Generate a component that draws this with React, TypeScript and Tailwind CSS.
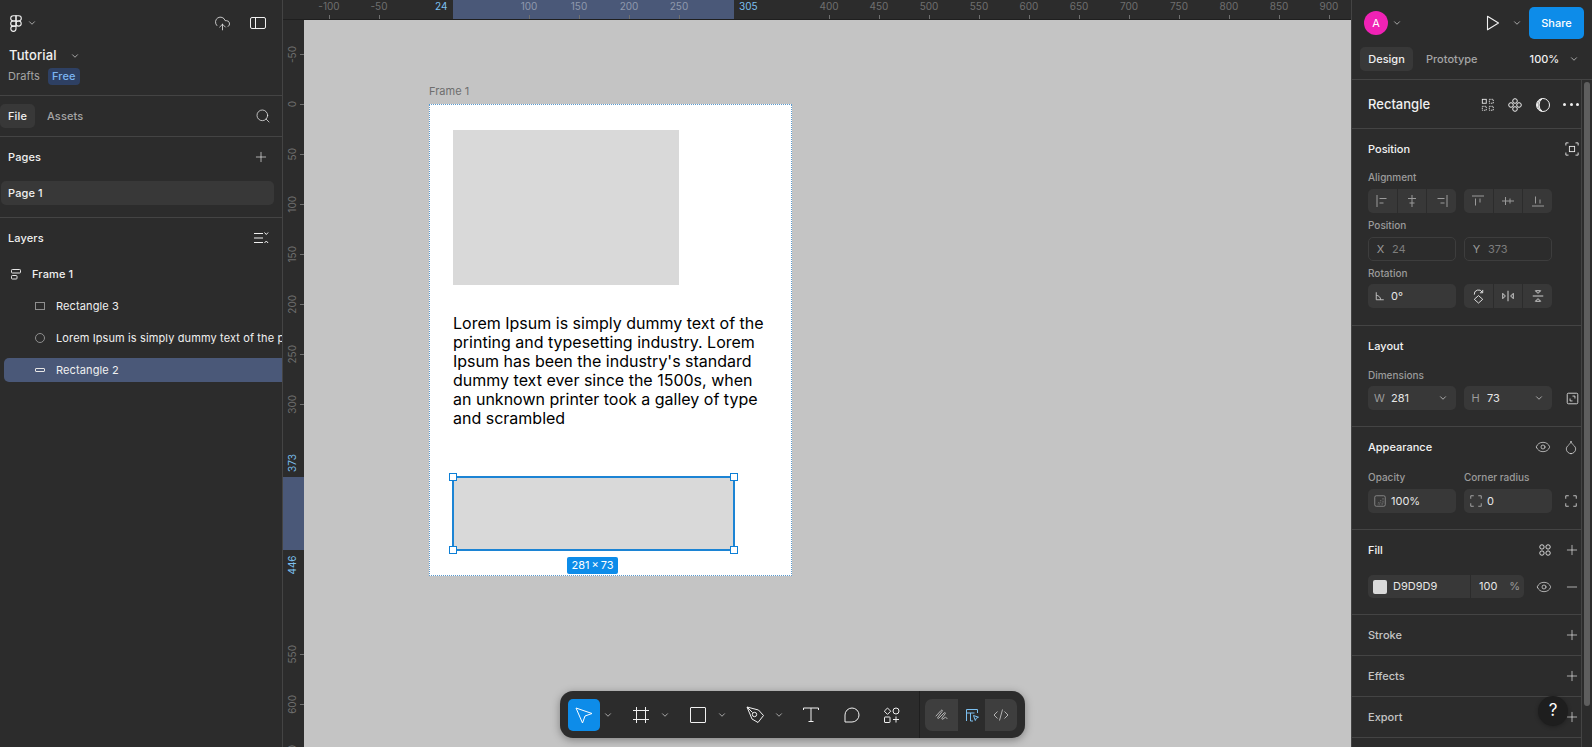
import React from "react";
import { ChevronDown, CloudUpload, Droplet, Eye, Minus, Plus, Search } from "lucide-react";

const topTicks = [-100, -50, 100, 150, 200, 250, 400, 450, 500, 550, 600, 650, 700, 750, 800, 850, 900];
const leftTicks = [-50, 0, 50, 100, 150, 200, 250, 300, 550, 600, 650];

const Chev = ({ className = "" }: { className?: string }) => (
  <ChevronDown size={10} strokeWidth={1.6} className={`text-[#e6e6e6] ${className}`} />
);

const Svg = ({ size = 16, className = "", children }: { size?: number; className?: string; children: React.ReactNode }) => (
  <svg
    width={size}
    height={size}
    viewBox="0 0 16 16"
    fill="none"
    stroke="currentColor"
    strokeWidth={1}
    className={`shrink-0 ${className}`}
  >
    {children}
  </svg>
);

const FigmaLogo = () => (
  <svg width="12" height="17" viewBox="0 0 12 16.5" fill="none" stroke="#f0f0f0" strokeWidth={1.1} className="shrink-0">
    <path d="M6 .5H3.3a2.6 2.6 0 0 0 0 5.2H6z" />
    <path d="M6 .5h2.7a2.6 2.6 0 0 1 0 5.2H6z" />
    <path d="M6 5.7H3.3a2.6 2.6 0 0 0 0 5.2H6z" />
    <circle cx="8.6" cy="8.3" r="2.6" />
    <path d="M3.3 10.9H6v2.6a2.6 2.6 0 1 1-2.7-2.6z" />
  </svg>
);

const SectionTitle = ({ title, dim, children }: { title: string; dim?: boolean; children?: React.ReactNode }) => (
  <div className="flex h-[40px] items-center justify-between pl-[16px] pr-[1px]">
    <span className={`text-[11px] ${dim ? "font-medium text-[#c4c4c4]" : "font-[550] text-[#f2f2f2]"}`}>{title}</span>
    <div className="flex items-center gap-[12px] text-[#eeeeee]">{children}</div>
  </div>
);

const Label = ({ children, className = "" }: { children: React.ReactNode; className?: string }) => (
  <div className={`flex h-[18px] items-center text-[10px] font-medium text-[#9b9b9b] ${className}`}>{children}</div>
);

const Field = ({
  prefix,
  value,
  muted,
  outlined,
  chevron,
}: {
  prefix: React.ReactNode;
  value: string;
  muted?: boolean;
  outlined?: boolean;
  chevron?: boolean;
}) => (
  <div
    className={`flex h-[24px] w-[88px] items-center rounded-[5px] pr-[8px] text-[11px] ${
      outlined ? "border border-[#3d3d3d]" : "bg-[#383838]"
    }`}
  >
    <span className="flex w-[23px] justify-center text-[#9b9b9b]">{prefix}</span>
    <span className={`flex-1 ${muted ? "text-[#7d7d7d]" : "text-[#e6e6e6]"}`}>{value}</span>
    {chevron && <Chev />}
  </div>
);

const ButtonGroup = ({ children }: { children: React.ReactNode }) => (
  <div className="flex h-[24px] w-[88px] divide-x divide-[#2c2c2c] overflow-hidden rounded-[5px] bg-[#383838]">
    {children}
  </div>
);

const GroupCell = ({ children, dim }: { children: React.ReactNode; dim?: boolean }) => (
  <div className={`flex flex-1 items-center justify-center ${dim ? "text-[#9a9a9a]" : "text-[#e6e6e6]"}`}>{children}</div>
);

const LeftPanel = () => (
  <aside className="flex w-[283px] shrink-0 flex-col border-r border-[#444444] bg-[#2c2c2c] text-[11px] tracking-[0.12px] text-[#f0f0f0]">
    <div className="flex h-[46px] items-center pl-[10px] pr-[16px]">
      <FigmaLogo />
      <Chev className="ml-[5px]" />
      <CloudUpload size={17} strokeWidth={1.1} className="ml-auto mr-[19px]" />
      <svg width="16" height="12" viewBox="0 0 16 12" fill="none" stroke="#f0f0f0" className="shrink-0">
        <rect x=".5" y=".5" width="15" height="11" rx="1.5" />
        <path d="M5.5 .5v11" />
      </svg>
    </div>
    <div className="h-[50px] border-b border-[#444444] pl-[9px]">
      <div className="mt-px flex h-[18px] items-center text-[13px] font-[550]">
        Tutorial
        <Chev className="ml-[13px]" />
      </div>
      <div className="mt-[3px] flex items-center text-[11px] text-[#a5a5a5]">
        <span className="-ml-[1px]">Drafts</span>
        <span className="ml-[8px] rounded-[4px] bg-[#2e4063] px-[4px] font-medium text-[#7cb5f2]">Free</span>
      </div>
    </div>
    <div className="flex h-[41px] items-center border-b border-[#444444] pr-[11px]">
      <span className="flex h-[24px] items-center rounded-[5px] bg-[#383838] px-[8px] font-[550]">File</span>
      <span className="ml-[12px] font-medium text-[#a5a5a5]">Assets</span>
      <Search size={16} strokeWidth={1.1} className="ml-auto" />
    </div>
    <div className="h-[81px] border-b border-[#444444]">
      <div className="mb-[4px] flex h-[40px] items-center justify-between pl-[8px] pr-[13px] font-[550]">
        Pages
        <Plus size={16} strokeWidth={1} />
      </div>
      <div className="mx-[1px] flex h-[24px] w-[273px] items-center rounded-[5px] bg-[#383838] pl-[7px] font-[550]">
        Page 1
      </div>
    </div>
    <div className="flex h-[40px] items-center justify-between pl-[8px] pr-[13px] font-[550]">
      Layers
      <svg width="16" height="12" viewBox="0 0 16 12" fill="none" stroke="#f0f0f0" strokeWidth={1}>
        <path d="M1 1.5h9M1 6h9M1 10.5h9M11.5 .5l1.8 2 1.8-2M11.5 11l1.8-2 1.8 2" />
      </svg>
    </div>
    <div className="flex h-[32px] items-center pl-[11px] font-[550]">
      <svg width="10" height="11" viewBox="0 0 10 11" fill="none" stroke="#e6e6e6" className="shrink-0">
        <rect x=".5" y=".5" width="9" height="3.5" rx=".8" />
        <rect x=".5" y="6.5" width="5.5" height="3.5" rx=".8" />
      </svg>
      <span className="ml-[11px]">Frame 1</span>
    </div>
    <div className="flex h-[32px] items-center pl-[35px]">
      <svg width="10" height="8" viewBox="0 0 10 8" fill="none" stroke="#8f8f8f" className="shrink-0">
        <rect x=".5" y=".5" width="9" height="7" />
      </svg>
      <span className="ml-[11px]">Rectangle 3</span>
    </div>
    <div className="flex h-[32px] items-center overflow-hidden pl-[35px]">
      <svg width="10" height="10" viewBox="0 0 10 10" fill="none" stroke="#8f8f8f" className="shrink-0">
        <circle cx="5" cy="5" r="4.5" />
      </svg>
      <span className="ml-[11px] whitespace-nowrap">Lorem Ipsum is simply dummy text of the printing</span>
    </div>
    <div className="mt-[4px] ml-[4px] flex h-[24px] items-center rounded-l-[5px] bg-[#4a5878] pl-[31px]">
      <span className="h-[4px] w-[10px] shrink-0 rounded-[1px] border border-[#e6e6e6]" />
      <span className="ml-[11px]">Rectangle 2</span>
    </div>
  </aside>
);

const TopRuler = () => (
  <div className="relative h-[20px] w-full shrink-0 border-b border-[#1f1f1f] bg-[#2c2c2c] text-[10px] text-[#6f6f6f]">
    <div className="absolute left-[170px] top-0 h-[19px] w-[281px] bg-[#4a5878]" />
    {topTicks.map((t) => (
      <div
        key={t}
        className="absolute top-0 flex h-[19px] w-[40px] -translate-x-1/2 flex-col items-center"
        style={{ left: t + 146 }}
      >
        <span className={`leading-[13px] ${t >= 100 && t <= 250 ? "text-[#8f99ad]" : ""}`}>{t}</span>
        <span className="mt-[2px] h-[4px] w-px bg-[#6f6f6f]" />
      </div>
    ))}
    <span className="absolute left-[152px] top-0 leading-[13px] text-[#7cc0f0]">24</span>
    <span className="absolute left-[456px] top-0 leading-[13px] text-[#7cc0f0]">305</span>
  </div>
);

const LeftRuler = () => (
  <div className="relative h-full w-[21px] shrink-0 overflow-hidden bg-[#2c2c2c] text-[10px] text-[#6f6f6f]">
    <div className="absolute left-0 top-[457px] h-[73px] w-[21px] bg-[#4a5878]" />
    {leftTicks.map((t) => (
      <div
        key={t}
        className="absolute left-0 flex h-[30px] w-[21px] -translate-y-1/2 items-center justify-between pl-[4px]"
        style={{ top: t + 84 }}
      >
        <span className="rotate-180 leading-none [writing-mode:vertical-rl]">{t}</span>
        <span className="h-px w-[4px] bg-[#6f6f6f]" />
      </div>
    ))}
    <span className="absolute left-[4px] top-[443px] -translate-y-1/2 rotate-180 leading-none text-[#7cc0f0] [writing-mode:vertical-rl]">373</span>
    <span className="absolute left-[4px] top-[545px] -translate-y-1/2 rotate-180 leading-none text-[#7cc0f0] [writing-mode:vertical-rl]">446</span>
  </div>
);

const Handle = ({ className }: { className: string }) => (
  <span className={`absolute h-[8px] w-[8px] border border-[#0d7fd6] bg-white ${className}`} />
);

const DesignFrame = () => (
  <>
    <span className="absolute left-[125px] top-[64px] text-[11px] leading-[14px] text-[#6e6e6e]">Frame 1</span>
    <div className="absolute left-[125px] top-[84px] h-[472px] w-[363px] border border-dotted border-[#5b9bd0] bg-white">
      <div className="absolute left-[23px] top-[25px] h-[155px] w-[226px] bg-[#d9d9d9]" />
      <p className="absolute left-[23px] top-[209px] w-[318px] font-['Inter',sans-serif] text-[16px] leading-[19.1px] text-black">
        Lorem Ipsum is simply dummy text of the printing and typesetting industry. Lorem Ipsum has been the industry's
        standard dummy text ever since the 1500s, when an unknown printer took a galley of type and scrambled
      </p>
      <div className="absolute left-[22px] top-[371px] h-[75px] w-[283px] border-2 border-[#1c84d4] bg-[#d9d9d9]">
        <Handle className="-left-[5px] -top-[5px]" />
        <Handle className="-right-[5px] -top-[5px]" />
        <Handle className="-bottom-[5px] -left-[5px]" />
        <Handle className="-bottom-[5px] -right-[5px]" />
      </div>
      <span className="absolute left-[137px] top-[452px] flex h-[17px] w-[51px] items-center justify-center rounded-[2px] bg-[#0d8ce9] text-[11px] text-white">
        281{"\u2009×\u2009"}73
      </span>
    </div>
  </>
);

const Toolbar = () => (
  <div className="absolute bottom-[9px] left-[256px] flex h-[47px] w-[465px] items-center rounded-[13px] bg-[#2c2c2c] pl-[8px] text-[#f0f0f0] shadow-[0_2px_8px_rgba(0,0,0,0.35)]">
    <div className="flex h-[32px] w-[32px] items-center justify-center rounded-[5px] bg-[#0d8ce9] text-white">
      <svg width="20" height="20" viewBox="0 0 20 20" fill="none" stroke="currentColor" strokeWidth={1}>
        <path d="M2 3l16 5.5-7 2.5-2.5 7z" strokeLinejoin="round" />
      </svg>
    </div>
    <Chev className="ml-[3px]" />
    <svg width="18" height="18" viewBox="0 0 18 18" fill="none" stroke="currentColor" className="ml-[19px]">
      <path d="M4.5 1v16M13.5 1v16M1 4.5h16M1 13.5h16" />
    </svg>
    <Chev className="ml-[10px]" />
    <span className="ml-[20px] h-[16px] w-[16px] rounded-[1px] border border-[#f0f0f0]" />
    <Chev className="ml-[11px]" />
    <svg width="20" height="20" viewBox="0 0 20 20" fill="none" stroke="currentColor" className="ml-[18px]">
      <path d="M2 2l11.5 3 5 5.5-5.5 7-6-3.5z" strokeLinejoin="round" />
      <path d="M2 2l5.5 5.5" />
      <circle cx="9.5" cy="9.5" r="2.2" />
    </svg>
    <Chev className="ml-[9px]" />
    <svg width="16" height="15" viewBox="0 0 16 15" fill="none" stroke="currentColor" className="ml-[19px]">
      <path d="M.5 3V1h15v2M8 1v13.5M5.5 14.5h5" />
    </svg>
    <svg width="16" height="16" viewBox="0 0 16 16" fill="none" stroke="currentColor" className="ml-[25px]">
      <path d="M1 15V8a7 7 0 1 1 7 7z" strokeLinejoin="round" />
    </svg>
    <svg width="18" height="16" viewBox="0 0 18 16" fill="none" stroke="currentColor" className="ml-[23px]">
      <path d="M4.5 1l3.2 3.2-3.2 3.2-3.2-3.2z" />
      <circle cx="13" cy="4" r="3" />
      <rect x="1.5" y="10" width="5.5" height="5.5" rx=".5" />
      <path d="M13 9.5v6M10 12.5h6" />
    </svg>
    <span className="ml-[18px] h-full w-px bg-[#1f1f1f]" />
    <div className="ml-[5px] flex h-[32px] w-[92px] items-center rounded-[7px] bg-[#3e3e3e]">
      <div className="flex h-full w-[33px] items-center justify-center text-[#b3b3b3]">
        <svg width="16" height="16" viewBox="0 0 16 16" fill="none" stroke="currentColor" strokeLinecap="round">
          <path d="M2 9l5-5.5c1-1 2 0 1 1L4 10c-1 1 0 2 1 1l5-5c1-1 2 0 1 1l-3 4c-.7 1 .3 1.6 1 1l2-1.5c.8-.5 1.5 0 2 1" />
        </svg>
      </div>
      <div className="flex h-full w-[27px] items-center justify-center bg-[#2c2c2c] text-[#7cc0f0]">
        <svg width="14" height="14" viewBox="0 0 14 14" fill="none" stroke="currentColor">
          <path d="M1.5 13V1.5h11V5M1.5 5h8M5.5 5v8H8" />
          <path d="M8.5 7.5l5 1.7-2.2 1-1 2.3z" />
        </svg>
      </div>
      <div className="flex h-full w-[32px] items-center justify-center text-[#b3b3b3]">
        <svg width="16" height="14" viewBox="0 0 16 14" fill="none" stroke="currentColor">
          <path d="M4.5 3.5L1 7l3.5 3.5M11.5 3.5L15 7l-3.5 3.5M9.5 1.5l-3 11" />
        </svg>
      </div>
    </div>
  </div>
);

const RightPanel = () => (
  <aside className="relative flex w-[241px] shrink-0 flex-col border-l border-[#444444] bg-[#2c2c2c] text-[11px] text-[#f0f0f0]">
    <div className="h-[80px] shrink-0 border-b border-[#444444]">
      <div className="flex h-[47px] items-start pt-[7px]">
        <span className="ml-[12px] mt-[4px] flex h-[24px] w-[24px] items-center justify-center rounded-full bg-[#f022b5] text-[11px] text-white">
          A
        </span>
        <Chev className="ml-[4px] mt-[11px]" />
        <svg width="14" height="16" viewBox="0 0 14 16" fill="none" stroke="#f0f0f0" strokeWidth={1.1} className="ml-[84px] mt-[8px]">
          <path d="M1.5 1.2L12.5 8 1.5 14.8z" strokeLinejoin="round" />
        </svg>
        <Chev className="ml-[12px] mt-[11px]" />
        <span className="ml-[7px] flex h-[32px] w-[55px] items-center justify-center rounded-[5px] bg-[#0d8ce9] font-medium text-white">
          Share
        </span>
      </div>
      <div className="flex h-[24px] items-center pl-[8px]">
        <span className="flex h-[24px] w-[53px] items-center justify-center rounded-[5px] bg-[#383838] font-[550]">Design</span>
        <span className="ml-[13px] font-medium text-[#a5a5a5]">Prototype</span>
        <span className="ml-[52px] font-medium">100%</span>
        <Chev className="ml-[10px]" />
      </div>
    </div>
    <div className="flex min-h-0 flex-1">
      <div className="w-[230px] shrink-0 border-r border-[#444444]">
        <div className="flex h-[49px] items-center justify-between border-b border-[#444444] pl-[16px] pr-[2px]">
          <span className="mt-[2px] text-[13px] font-[550]">Rectangle</span>
          <div className="mt-[1px] flex items-center gap-[12px]">
            <Svg size={14}>
              <rect x="1.5" y="1.5" width="4.5" height="4.5" />
              <rect x="9.5" y="1.5" width="4.5" height="4.5" strokeDasharray="1.5 1" />
              <rect x="1.5" y="9.5" width="4.5" height="4.5" strokeDasharray="1.5 1" />
              <rect x="9.5" y="9.5" width="4.5" height="4.5" strokeDasharray="1.5 1" />
            </Svg>
            <Svg size={16}>
              <circle cx="8" cy="4" r="2.3" />
              <circle cx="4" cy="8" r="2.3" />
              <circle cx="12" cy="8" r="2.3" />
              <circle cx="8" cy="12" r="2.3" />
            </Svg>
            <Svg size={16}>
              <circle cx="8" cy="8" r="6.5" />
              <path d="M7 1.8a6.5 6.5 0 0 0 0 12.4A8 8 0 0 1 7 1.8z" fill="#9b9b9b" />
            </Svg>
            <div className="flex w-[16px] justify-between">
              <span className="h-[3px] w-[3px] rounded-full bg-[#f0f0f0]" />
              <span className="h-[3px] w-[3px] rounded-full bg-[#f0f0f0]" />
              <span className="h-[3px] w-[3px] rounded-full bg-[#f0f0f0]" />
            </div>
          </div>
        </div>

        <div className="h-[197px] border-b border-[#444444]">
          <SectionTitle title="Position">
            <Svg size={14} className="mr-[1px]">
              <path d="M1 4V1h3M12 1h3v3M15 12v3h-3M4 15H1v-3" />
              <rect x="5" y="5" width="6" height="6" />
            </Svg>
          </SectionTitle>
          <div className="pl-[16px]">
            <Label className="-mt-[1px]">Alignment</Label>
            <div className="mt-[3px] flex gap-[8px]">
              <ButtonGroup>
                <GroupCell dim><Svg size={16}><path d="M3 2v12M5.5 5.5h7M5.5 10h4" /></Svg></GroupCell>
                <GroupCell dim><Svg size={16}><path d="M8 2v12M4 5.5h8M5.5 10h5" /></Svg></GroupCell>
                <GroupCell dim><Svg size={16}><path d="M13 2v12M3.5 5.5h7M6.5 10h4" /></Svg></GroupCell>
              </ButtonGroup>
              <ButtonGroup>
                <GroupCell dim><Svg size={16}><path d="M2 3h12M5.5 5.5v7M10 5.5v4" /></Svg></GroupCell>
                <GroupCell dim><Svg size={16}><path d="M2 8h12M5.5 4v8M10 5.5v5" /></Svg></GroupCell>
                <GroupCell dim><Svg size={16}><path d="M2 13h12M5.5 3.5v7M10 6.5v4" /></Svg></GroupCell>
              </ButtonGroup>
            </div>
            <Label className="mt-[3px]">Position</Label>
            <div className="mt-[3px] flex gap-[8px]">
              <Field outlined muted prefix="X" value="24" />
              <Field outlined muted prefix="Y" value="373" />
            </div>
            <Label className="mt-[3px]">Rotation</Label>
            <div className="mt-[2px] flex gap-[8px]">
              <Field
                prefix={
                  <Svg size={10} className="text-[#c4c4c4]">
                    <path d="M2 2v12h12M2 7a7 7 0 0 1 7 7" strokeWidth={1.5} />
                  </Svg>
                }
                value="0°"
              />
              <ButtonGroup>
                <GroupCell>
                  <Svg size={15}>
                    <path d="M8 7l4.5 4-4.5 4-4.5-4zM3.5 6A4.5 4.5 0 0 1 12 3.5M12.5 1v3H9.5" />
                  </Svg>
                </GroupCell>
                <GroupCell><Svg size={14}><path d="M8 2v12M2 5v6l3-3zM14 5v6l-3-3z" /></Svg></GroupCell>
                <GroupCell><Svg size={14}><path d="M2 8h12M5 2h6l-3 3zM5 14h6l-3-3z" /></Svg></GroupCell>
              </ButtonGroup>
            </div>
          </div>
        </div>

        <div className="h-[101px] border-b border-[#444444]">
          <SectionTitle title="Layout" />
          <div className="pl-[16px]">
            <Label>Dimensions</Label>
            <div className="mt-[2px] flex items-center gap-[8px]">
              <Field prefix="W" value="281" chevron />
              <Field prefix="H" value="73" chevron />
              <Svg size={13} className="ml-[6px] text-[#eeeeee]">
                <rect x="1.5" y="1.5" width="13" height="13" rx="1.5" />
                <path d="M5 8v3h3M8 5h3v3" />
              </Svg>
            </div>
          </div>
        </div>

        <div className="h-[103px] border-b border-[#444444]">
          <SectionTitle title="Appearance">
            <Eye size={16} strokeWidth={1} />
            <Droplet size={16} strokeWidth={1} className="mr-[1px]" />
          </SectionTitle>
          <div className="mt-[1px] pl-[16px]">
            <div className="flex gap-[8px]">
              <Label className="w-[88px]">Opacity</Label>
              <Label>Corner radius</Label>
            </div>
            <div className="mt-[3px] flex items-center gap-[8px]">
              <Field
                prefix={
                  <Svg size={12} className="text-[#9b9b9b]">
                    <rect x="1" y="1" width="14" height="14" rx="2" />
                    <path d="M12 4v8H4M9 7v3M6 10h1" strokeDasharray="1 1" />
                  </Svg>
                }
                value="100%"
              />
              <Field
                prefix={
                  <Svg size={12} className="text-[#c4c4c4]">
                    <path d="M1 5V1h4M11 1h4v4M15 11v4h-4M5 15H1v-4" />
                  </Svg>
                }
                value="0"
              />
              <Svg size={12} className="ml-[5px] text-[#eeeeee]">
                <path d="M1 5V1h4M11 1h4v4M15 11v4h-4M5 15H1v-4" />
              </Svg>
            </div>
          </div>
        </div>

        <div className="h-[85px] border-b border-[#444444]">
          <SectionTitle title="Fill">
            <Svg size={14}>
              <circle cx="4.5" cy="4.5" r="2.5" />
              <circle cx="11.5" cy="4.5" r="2.5" />
              <circle cx="4.5" cy="11.5" r="2.5" />
              <circle cx="11.5" cy="11.5" r="2.5" />
            </Svg>
            <Plus size={16} strokeWidth={1} />
          </SectionTitle>
          <div className="mt-[5px] flex items-center pl-[16px] text-[#eeeeee]">
            <div className="flex h-[23px] w-[156px] items-center rounded-[5px] bg-[#383838] pl-[5px] text-[11px] text-[#e6e6e6]">
              <span className="h-[14px] w-[14px] rounded-[2px] bg-[#d9d9d9]" />
              <span className="ml-[6px] w-[77px]">D9D9D9</span>
              <span className="flex h-full items-center border-l border-[#2c2c2c] pl-[8px]">100</span>
              <span className="ml-[12px] text-[#9b9b9b]">%</span>
            </div>
            <Eye size={16} strokeWidth={1} className="ml-[12px]" />
            <Minus size={16} strokeWidth={1} className="ml-[12px]" />
          </div>
        </div>

        <div className="h-[41px] border-b border-[#444444]">
          <SectionTitle title="Stroke" dim>
            <Plus size={16} strokeWidth={1} />
          </SectionTitle>
        </div>
        <div className="h-[41px] border-b border-[#444444]">
          <SectionTitle title="Effects" dim>
            <Plus size={16} strokeWidth={1} />
          </SectionTitle>
        </div>
        <div className="h-[41px] border-b border-[#444444]">
          <SectionTitle title="Export" dim>
            <Plus size={16} strokeWidth={1} />
          </SectionTitle>
        </div>
      </div>
      <div className="flex-1 pl-[2px] pt-[2px]">
        <div className="h-[624px] w-[6px] rounded-full bg-[#5e5e5e]" />
      </div>
    </div>
    <span className="absolute left-[186px] top-[696px] flex h-[30px] w-[30px] items-center justify-center rounded-full bg-[#1e1e1e] text-[17px] text-white shadow-[0_1px_4px_rgba(0,0,0,0.3)]">
      ?
    </span>
  </aside>
);

export default function App() {
  return (
    <div className="flex h-[747px] w-[1592px] overflow-hidden bg-[#2c2c2c] font-['Inter',sans-serif]">
      <LeftPanel />
      <main className="flex min-w-0 flex-1 flex-col">
        <TopRuler />
        <div className="flex min-h-0 flex-1">
          <LeftRuler />
          <div className="relative flex-1 bg-[#c4c4c4]">
            <DesignFrame />
            <Toolbar />
          </div>
        </div>
      </main>
      <RightPanel />
    </div>
  );
}
